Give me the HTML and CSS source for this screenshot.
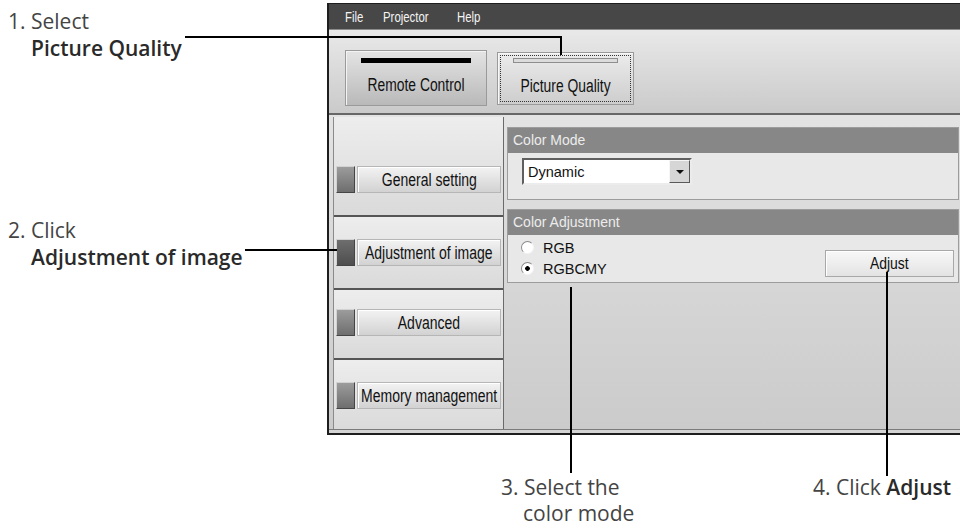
FILE: index.html
```
<!DOCTYPE html>
<html>
<head>
<meta charset="utf-8">
<link rel="stylesheet" href="styles.css">
</head>
<body>
<div class="page">
  <div class="top">
    <div class="notes">
      <div class="note n1">1. Select<br><b>Picture Quality</b></div>
      <div class="note n2">2. Click<br><b>Adjustment of image</b></div>
    </div>
    <div class="window">
      <div class="menubar">
        <span class="mi mi-file"><span class="cond">File</span></span>
        <span class="mi mi-proj"><span class="cond">Projector</span></span>
        <span class="mi"><span class="cond">Help</span></span>
      </div>
      <div class="toolbar">
        <div class="tbtn tbtn-remote">
          <div class="tbar-black"></div>
          <div class="tlabel"><span class="cond">Remote Control</span></div>
        </div>
        <div class="tbtn tbtn-pq">
          <div class="tbar-light"></div>
          <div class="tlabel tlabel-pq"><span class="cond">Picture Quality</span></div>
        </div>
      </div>
      <div class="main">
        <div class="sidebar">
          <div class="sec sec1">
            <div class="ind"></div>
            <div class="sbtn"><span class="cond">General setting</span></div>
          </div>
          <div class="sec sec2">
            <div class="ind ind-on"></div>
            <div class="sbtn"><span class="cond">Adjustment of image</span></div>
          </div>
          <div class="sec sec3">
            <div class="ind"></div>
            <div class="sbtn"><span class="cond">Advanced</span></div>
          </div>
          <div class="sec sec4">
            <div class="ind"></div>
            <div class="sbtn"><span class="cond">Memory management</span></div>
          </div>
        </div>
        <div class="content">
          <div class="group">
            <div class="ghead">Color Mode</div>
            <div class="gbody1">
              <div class="select">
                <div class="seltext">Dynamic</div>
                <div class="selbtn"><div class="arrow"></div></div>
              </div>
            </div>
          </div>
          <div class="group">
            <div class="ghead">Color Adjustment</div>
            <div class="gbody2">
              <div class="radios">
                <div class="radio"><span class="rdot"></span>RGB</div>
                <div class="radio"><span class="rdot rdot-on"></span>RGBCMY</div>
              </div>
              <div class="adjust"><span class="cond">Adjust</span></div>
            </div>
          </div>
        </div>
      </div>
    </div>
  </div>
  <div class="bottom">
    <div class="note n3">3. Select the<br>color mode</div>
    <div class="note n4">4. Click <b>Adjust</b></div>
  </div>
  <div class="callout c1h"></div>
  <div class="callout c1v"></div>
  <div class="callout c2"></div>
  <div class="callout c3"></div>
  <div class="callout c4"></div>
</div>
</body>
</html>
```

FILE: styles.css
```
html, body {
  margin: 0;
  padding: 0;
}
body {
  width: 960px;
  height: 529px;
  overflow: hidden;
  background: #ffffff;
}
.page {
  position: relative;
  width: 960px;
  height: 529px;
  overflow: hidden;
}
.top {
  display: flex;
  align-items: flex-start;
}
.notes {
  width: 327px;
  flex: none;
  padding-top: 8px;
}
.note {
  font-family: "Open Sans", "DejaVu Sans", sans-serif;
  font-size: 21px;
  line-height: 27px;
  font-weight: 400;
  color: #444;
  padding-left: 31px;
  text-indent: -23px;
  white-space: nowrap;
}
.note b {
  font-weight: 600;
  color: #2a2a2a;
}
.n2 {
  margin-top: 155px;
}

/* window */
.window {
  flex: none;
  width: 637px;
  margin-top: 3px;
  border-style: solid;
  border-color: #1e1e1e;
  border-width: 1px 2px 2px 2px;
  background: #d4d4d4;
  padding-bottom: 3px;
  font-family: "Liberation Sans", Arial, sans-serif;
  color: #111;
}
.cond {
  display: inline-block;
  white-space: nowrap;
  transform: scaleX(0.8);
  transform-origin: center center;
}
.menubar {
  height: 25px;
  background: #474747;
  border-bottom: 1px solid #8c8c8c;
  display: flex;
  align-items: center;
  padding-left: 16px;
  color: #f4f4f4;
  font-size: 15px;
  line-height: 25px;
}
.menubar .cond {
  transform: scaleX(0.76);
  transform-origin: left center;
}
.mi {
  display: block;
}
.mi-file {
  width: 38px;
}
.mi-proj {
  width: 74px;
}
.toolbar {
  height: 83px;
  background: linear-gradient(#e9e9e9, #cacaca);
  border-bottom: 2px solid #676767;
  display: flex;
  align-items: flex-start;
  padding-left: 16px;
  gap: 10px;
}
.tbtn {
  box-sizing: border-box;
  display: flex;
  flex-direction: column;
  align-items: center;
  border: 1px solid #9a9a9a;
}
.tbtn-remote {
  width: 142px;
  height: 56px;
  margin-top: 20px;
  padding-top: 7px;
  background: linear-gradient(#e4e4e4, #b9b9b9);
  box-shadow: inset 1px 1px 0 #f4f4f4;
}
.tbar-black {
  width: 110px;
  height: 5px;
  background: #000;
}
.tlabel {
  font-size: 18px;
  line-height: 20px;
  margin-top: 12px;
  display: flex;
  justify-content: center;
}
.tlabel .cond {
  transform: scaleX(0.77);
}
.tbtn-pq {
  position: relative;
  width: 137px;
  height: 53px;
  margin-top: 22px;
  padding-top: 5px;
  background: linear-gradient(#ececec, #cdcdcd);
  box-shadow: inset 1px 1px 0 #f8f8f8;
}
.tbtn-pq::after {
  content: "";
  position: absolute;
  left: 2px;
  top: 2px;
  right: 2px;
  bottom: 2px;
  border: 1px dotted #333;
}
.tbar-light {
  width: 105px;
  height: 5px;
  box-sizing: border-box;
  border: 1px solid #8e8e8e;
  background: #dcdcdc;
}
.tlabel-pq {
  margin-top: 13px;
}

/* main area */
.main {
  display: flex;
  height: 312px;
  padding: 2px 0 0 4px;
  border-bottom: 1px solid #7a7a7a;
  background: linear-gradient(#e3e3e3, #cbcbcb);
}
.sidebar {
  width: 169px;
  flex: none;
  border-left: 1px solid #8a8a8a;
  border-right: 1px solid #6a6a6a;
  display: flex;
  flex-direction: column;
}
.sec {
  box-sizing: border-box;
  display: flex;
  align-items: flex-end;
  padding: 0 0 22px 2px;
  border-bottom: 2px solid #555;
  background: linear-gradient(#ededed, #dadada);
}
.sec1 {
  height: 100px;
}
.sec2 {
  height: 73px;
}
.sec3 {
  height: 70px;
}
.sec4 {
  height: 69px;
  border-bottom: none;
  padding-bottom: 20px;
}
.ind {
  width: 19px;
  height: 27px;
  flex: none;
  box-sizing: border-box;
  border: 1px solid;
  border-color: #d2d2d2 #454545 #454545 #d2d2d2;
  background: linear-gradient(#9c9c9c, #6e6e6e);
  margin-right: 2px;
}
.ind-on {
  background: linear-gradient(#6e6e6e, #4e4e4e);
}
.sbtn {
  width: 144px;
  height: 27px;
  flex: none;
  box-sizing: border-box;
  border: 1px solid #b6b6b6;
  background: linear-gradient(#f3f3f3, #d2d2d2);
  box-shadow: inset 1px 1px 0 #ffffff;
  display: flex;
  justify-content: center;
  align-items: center;
  font-size: 17.5px;
  line-height: 20px;
}
.content {
  flex: 1;
  display: flex;
  flex-direction: column;
  gap: 9px;
  padding: 10px 7px 0 3px;
}
.group {
  border: 1px solid #9c9c9c;
  background: #e8e8e8;
}
.ghead {
  height: 25px;
  background: #878787;
  color: #ececec;
  font-size: 14px;
  line-height: 25px;
  padding-left: 5px;
}
.gbody1 {
  box-sizing: border-box;
  height: 46px;
  padding: 5px 0 0 14px;
}
.select {
  width: 170px;
  height: 27px;
  box-sizing: border-box;
  border: 2px solid;
  border-color: #5f5f5f #ececec #ececec #5f5f5f;
  background: #fff;
  display: flex;
  align-items: center;
}
.seltext {
  flex: 1;
  padding-left: 4px;
  font-size: 14.5px;
}
.selbtn {
  width: 21px;
  height: 23px;
  box-sizing: border-box;
  border: 1px solid;
  border-color: #f6f6f6 #5a5a5a #5a5a5a #f6f6f6;
  background: #d6d6d6;
  display: flex;
  align-items: center;
  justify-content: center;
}
.arrow {
  width: 0;
  height: 0;
  border-left: 4px solid transparent;
  border-right: 4px solid transparent;
  border-top: 4px solid #111;
}
.gbody2 {
  display: flex;
  justify-content: space-between;
  padding: 2px 4px 3px 13px;
}
.radio {
  display: flex;
  align-items: center;
  height: 21px;
  font-size: 14.5px;
}
.rdot {
  width: 13px;
  height: 13px;
  flex: none;
  box-sizing: border-box;
  border-radius: 50%;
  border: 1px solid;
  border-color: #8a8a8a #f4f4f4 #f4f4f4 #8a8a8a;
  background: #fff;
  margin-right: 9px;
}
.rdot-on {
  background: radial-gradient(circle, #000 0, #000 2px, #fff 2.6px);
}
.adjust {
  width: 129px;
  height: 27px;
  box-sizing: border-box;
  align-self: flex-end;
  margin-bottom: 2px;
  border: 1px solid #a8a8a8;
  background: linear-gradient(#f8f8f8, #e3e3e3);
  box-shadow: inset 1px 1px 0 #fff;
  display: flex;
  justify-content: center;
  align-items: center;
  font-size: 16px;
}
.adjust .cond {
  transform: scaleX(0.87);
}

/* bottom notes */
.bottom {
  display: flex;
  align-items: flex-start;
  margin-top: 39px;
}
.n3 {
  box-sizing: border-box;
  width: 150px;
  margin-left: 501px;
  padding-left: 22px;
  text-indent: -22px;
  line-height: 26px;
}
.n4 {
  margin-left: 162px;
  padding-left: 0;
  text-indent: 0;
  line-height: 26px;
}

/* callout lines */
.callout {
  position: absolute;
  background: #000;
}
.c1h {
  left: 185px;
  top: 36px;
  width: 377px;
  height: 2px;
}
.c1v {
  left: 560px;
  top: 36px;
  width: 2px;
  height: 19px;
}
.c2 {
  left: 245px;
  top: 249px;
  width: 92px;
  height: 2px;
}
.c3 {
  left: 570px;
  top: 287px;
  width: 2px;
  height: 186px;
}
.c4 {
  left: 886px;
  top: 272px;
  width: 2px;
  height: 204px;
}
```
